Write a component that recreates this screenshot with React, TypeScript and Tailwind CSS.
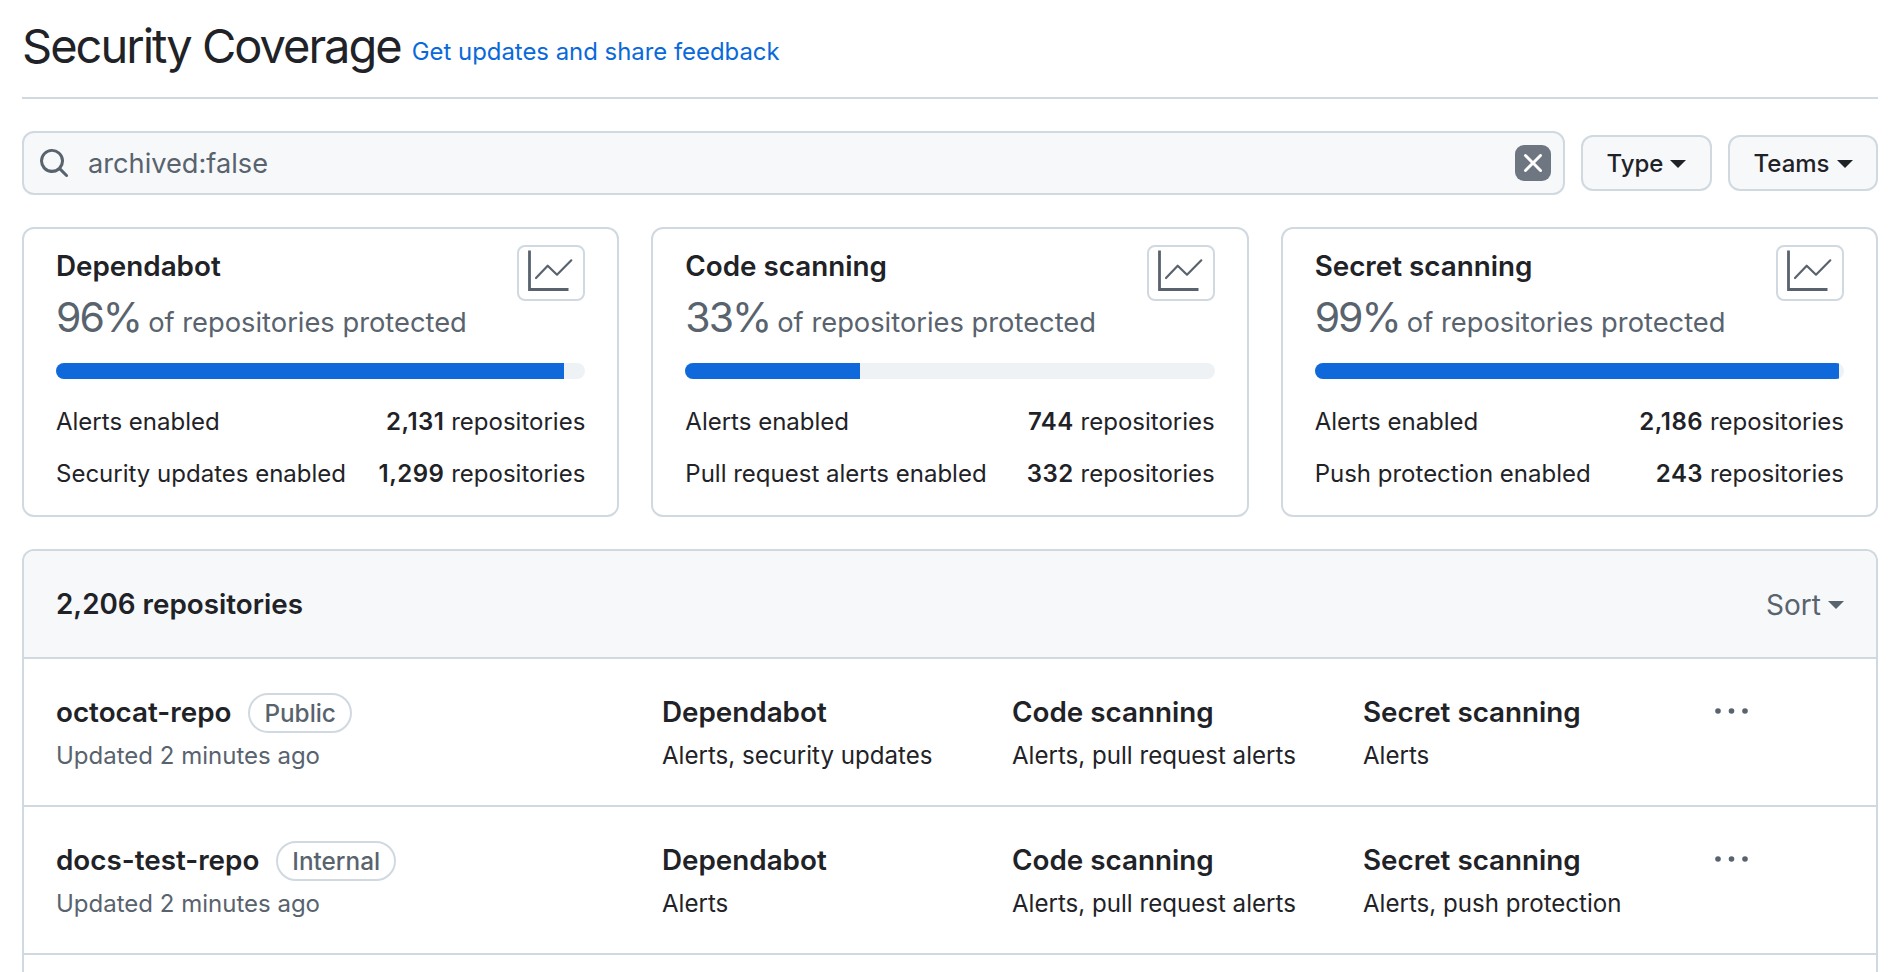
const font = "[font-family:Inter,'Liberation_Sans',sans-serif]";

const cards = [
  { title: "Dependabot", pct: 96, fill: "w-[96%]", rows: [["Alerts enabled", "2,131"], ["Security updates enabled", "1,299"]] },
  { title: "Code scanning", pct: 33, fill: "w-[33%]", rows: [["Alerts enabled", "744"], ["Pull request alerts enabled", "332"]] },
  { title: "Secret scanning", pct: 99, fill: "w-[99%]", rows: [["Alerts enabled", "2,186"], ["Push protection enabled", "243"]] },
];

const repos = [
  { name: "octocat-repo", badge: "Public", dep: "Alerts, security updates", code: "Alerts, pull request alerts", secret: "Alerts" },
  { name: "docs-test-repo", badge: "Internal", dep: "Alerts", code: "Alerts, pull request alerts", secret: "Alerts, push protection" },
];

const Caret = ({ color = "border-t-[#1f2328]" }: { color?: string }) => (
  <span className={`inline-block ml-[7px] w-0 h-0 border-x-[8px] border-x-transparent border-t-[8px] ${color}`} />
);

const GraphIcon = () => (
  <svg viewBox="0 0 64 52" className="w-[64px] h-[52px] fill-none stroke-[#59636e]">
    <path d="M10.5 3.5v39h39" strokeWidth="2.8" />
    <path d="M17 31 L28.7 18.7 L38 27.7 L52.3 13.3" strokeWidth="2.2" strokeLinecap="round" strokeLinejoin="round" />
  </svg>
);

const Column = ({ title, detail, width }: { title: string; detail: string; width: string }) => (
  <div className={`${width} shrink-0`}>
    <div className="text-[27.8px] leading-[34px] font-semibold text-[#1f2328]">{title}</div>
    <div className="mt-[10px] text-[24.1px] leading-[34px] text-[#1f2328]">{detail}</div>
  </div>
);

export default function App() {
  return (
    <div className={`${font} w-[1896px] h-[972px] overflow-hidden bg-white pl-[22px] pr-[18px] pt-[14px]`}>
      {/* Header */}
      <div className="flex items-start h-[85px] border-b-2 border-[#d1d9e0] pt-[2px]">
        <h1 className="text-[47px] leading-[60px] font-normal tracking-[-2px] text-[#1f2328]">Security Coverage</h1>
        <a className="ml-[11px] mt-[18px] text-[23.9px] leading-[36px] text-[#0969da]">Get updates and share feedback</a>
      </div>

      {/* Search and filters */}
      <div className="mt-[32px] flex items-center h-[64px]">
        <div className="flex-1 h-[64px] flex items-center bg-[#f6f8fa] border-2 border-[#d1d9e0] rounded-[12px] pl-[14px] pr-[12px]">
          <svg viewBox="0 0 16 16" className="w-[32px] h-[32px] fill-[#59636e] shrink-0">
            <path d="M10.68 11.74a6 6 0 0 1-7.922-8.982 6 6 0 0 1 8.982 7.922l3.04 3.04a.749.749 0 0 1-.326 1.275.749.749 0 0 1-.734-.215ZM11.5 7a4.499 4.499 0 1 0-8.997 0A4.499 4.499 0 0 0 11.5 7Z" />
          </svg>
          <span className="ml-[18px] pt-[2px] text-[27.2px] text-[#59636e] flex-1">archived:false</span>
          <span className="w-[36px] h-[36px] rounded-[9px] bg-[#6e7781] flex items-center justify-center">
            <svg viewBox="0 0 16 16" className="w-[32px] h-[32px] fill-white">
              <path d="M3.72 3.72a.75.75 0 0 1 1.06 0L8 6.94l3.22-3.22a.749.749 0 0 1 1.275.326.749.749 0 0 1-.215.734L9.06 8l3.22 3.22a.749.749 0 0 1-.326 1.275.749.749 0 0 1-.734-.215L8 9.06l-3.22 3.22a.751.751 0 0 1-1.042-.018.751.751 0 0 1-.018-1.042L6.94 8 3.72 4.78a.75.75 0 0 1 0-1.06Z" />
            </svg>
          </span>
        </div>
        <button className="ml-[16px] w-[131px] h-[56px] pt-[2px] flex items-center justify-center bg-[#f6f8fa] border-2 border-[#d1d9e0] rounded-[12px] text-[24px] font-medium text-[#1f2328]">
          Type<Caret />
        </button>
        <button className="ml-[16px] w-[150px] h-[56px] pt-[2px] flex items-center justify-center bg-[#f6f8fa] border-2 border-[#d1d9e0] rounded-[12px] text-[24px] font-medium text-[#1f2328]">
          Teams<Caret />
        </button>
      </div>

      {/* Coverage cards */}
      <div className="mt-[32px] grid grid-cols-3 gap-[32px]">
        {cards.map((c) => (
          <div key={c.title} className="relative h-[290px] border-2 border-[#d1d9e0] rounded-[12px] px-[32px] pt-[20px]">
            <div className="absolute top-[16px] right-[32px] w-[68px] h-[56px] border-2 border-[#d1d9e0] rounded-[8px]">
              <GraphIcon />
            </div>
            <div className="text-[27.8px] leading-[34px] font-semibold text-[#1f2328]">{c.title}</div>
            <div className="mt-[9px] text-[#59636e] leading-[50px]">
              <span className="text-[41px] tracking-[-2px]">{c.pct}%</span>
              <span className="ml-[7px] text-[27.3px]">of repositories protected</span>
            </div>
            <div className="mt-[12px] h-[16px] rounded-full bg-[#eff2f5] overflow-hidden">
              <div className={`h-full bg-[#0f69da] ${c.fill}`} />
            </div>
            {c.rows.map((r, i) => (
              <div key={r[0]} className={`flex justify-between text-[24px] leading-[34px] text-[#1f2328] ${i === 0 ? "mt-[26px]" : "mt-[18px]"}`}>
                <span>{r[0]}</span>
                <span><b className="font-semibold tracking-[0.5px]">{r[1]}</b> repositories</span>
              </div>
            ))}
          </div>
        ))}
      </div>

      {/* Repository list */}
      <div className="mt-[32px] border-x-2 border-t-2 border-[#d1d9e0] rounded-t-[12px] overflow-hidden">
        <div className="h-[108px] pt-[2px] bg-[#f6f8fa] flex items-center justify-between px-[32px] border-b-2 border-[#d1d9e0]">
          <span className="text-[27.8px] font-semibold text-[#1f2328]">2,206 repositories</span>
          <span className="flex items-center text-[28px] text-[#59636e]">Sort<Caret color="border-t-[#59636e]" /></span>
        </div>
        {repos.map((r) => (
          <div key={r.name} className="h-[148px] flex items-start px-[32px] pt-[36px] border-b-2 border-[#d1d9e0]">
            <div className="w-[606px] shrink-0">
              <div className="flex items-center h-[34px] mt-[1px]">
                <span className="text-[27.8px] font-semibold text-[#1f2328]">{r.name}</span>
                <span className="ml-[17px] h-[40px] px-[14px] flex items-center border-2 border-[#d1d9e0] rounded-full text-[24.3px] font-medium text-[#59636e]">{r.badge}</span>
              </div>
              <div className="mt-[9px] text-[24px] leading-[34px] text-[#59636e]">Updated 2 minutes ago</div>
            </div>
            <Column title="Dependabot" detail={r.dep} width="w-[350px]" />
            <Column title="Code scanning" detail={r.code} width="w-[351px]" />
            <Column title="Secret scanning" detail={r.secret} width="w-[351px]" />
            <svg viewBox="0 0 33 12" className="w-[33px] h-[12px] ml-[1px] mt-[10px] fill-[#59636e] shrink-0">
              <circle cx="3" cy="6" r="2.8" />
              <circle cx="16.5" cy="6" r="2.8" />
              <circle cx="30" cy="6" r="2.8" />
            </svg>
          </div>
        ))}
        <div className="h-[60px]" />
      </div>
    </div>
  );
}
